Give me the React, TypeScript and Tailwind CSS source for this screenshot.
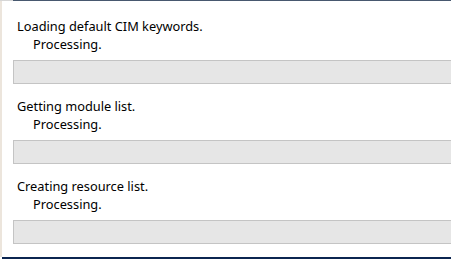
export default function App() {
  const steps = ["Loading default CIM keywords.", "Getting module list.", "Creating resource list."]

  return (
    <div className="w-[451px] h-[259px] overflow-hidden bg-white flex flex-col font-['Noto_Sans',sans-serif]">
      <div className="flex h-px shrink-0">
        <div className="w-[13px] bg-[#d6d6d6]" />
        <div className="flex-1 bg-[#47586f]" />
      </div>
      <div className="flex flex-1">
        <div className="w-[2px] bg-[#ece5dc]" />
        <div className="flex-1 flex flex-col gap-[13px] pt-[16px] pl-[11px]">
          {steps.map((s) => (
            <div key={s} className="flex flex-col">
              <div className="pl-[4px] text-[12.8px] leading-[18px] text-black">
                <div>{s}</div>
                <div className="pl-[16px]">Processing.</div>
              </div>
              <div className="mt-[7px] h-[24px] bg-[#e6e6e6] border border-r-0 border-[#c4c4c4]" />
            </div>
          ))}
        </div>
      </div>
      <div className="h-[2px] shrink-0 ml-[2px] bg-[#0b2550]" />
    </div>
  )
}
